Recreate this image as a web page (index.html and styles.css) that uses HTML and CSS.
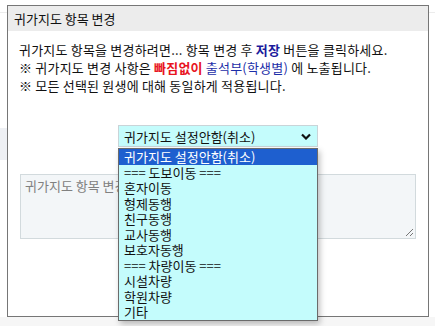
FILE: index.html
```html
<!DOCTYPE html>
<html>
<head>
    <title>귀가지도 항목 변경</title>
    <link rel="stylesheet" href="styles.css">
</head>
<body>
    <div class="page-bg">
        <div class="bg-line"></div>
        <div class="bg-side"></div>
        <div class="bg-foot"></div>
    </div>

    <div class="dialog">
        <div class="dialog-title">귀가지도 항목 변경</div>
        <div class="dialog-body">
            <p class="notice">
                귀가지도 항목을 변경하려면... 항목 변경 후 <b class="blue">저장</b> 버튼을 클릭하세요.<br>
                ※ 귀가지도 변경 사항은 <b class="red">빠짐없이</b> <span class="blue">출석부(학생별)</span> 에 노출됩니다.<br>
                ※ 모든 선택된 원생에 대해 동일하게 적용됩니다.
            </p>

            <div class="select-wrap">
                <div class="select">
                    <span>귀가지도 설정안함(취소)</span>
                    <svg class="chevron" width="10" height="7" viewBox="0 0 10 7">
                        <path d="M1 1.5 L5 5.5 L9 1.5" fill="none" stroke="#111" stroke-width="2.2"/>
                    </svg>
                </div>
                <ul class="options">
                    <li class="active">귀가지도 설정안함(취소)</li>
                    <li>=== 도보이동 ===</li>
                    <li>혼자이동</li>
                    <li>형제동행</li>
                    <li>친구동행</li>
                    <li>교사동행</li>
                    <li>보호자동행</li>
                    <li>=== 차량이동 ===</li>
                    <li>시설차량</li>
                    <li>학원차량</li>
                    <li>기타</li>
                </ul>
            </div>

            <div class="memo">
                <span class="placeholder">귀가지도 항목 변경 메모</span>
                <svg class="grip" width="9" height="9" viewBox="0 0 9 9">
                    <path d="M8 1 L1 8 M8 5 L5 8" stroke="#777" stroke-width="1"/>
                </svg>
            </div>
        </div>
    </div>
</body>
</html>
```

FILE: styles.css
```css
body {
    margin: 0;
    padding: 5px 7px;
    background: #fff;
    font-family: "Noto Sans CJK KR", "Noto Sans", sans-serif;
    font-size: 13px;
    color: #111;
    position: relative;
    height: 316px;
    overflow: hidden;
}
.page-bg .bg-line {
    position: absolute;
    top: 12px;
    left: 0;
    right: 0;
    height: 1px;
    background: #ececec;
}
.page-bg .bg-side {
    position: absolute;
    top: 128px;
    left: 0;
    width: 7px;
    height: 32px;
    background: #eef0f4;
}
.page-bg .bg-foot {
    position: absolute;
    left: 0;
    right: 0;
    top: 317px;
    height: 9px;
    background: #f6f6f6;
}
.dialog {
    position: relative;
    width: 420px;
    height: 310px;
    border: 1px solid #767676;
    background: #fff;
}
.dialog-title {
    height: 25px;
    line-height: 25px;
    padding-left: 6px;
    background: #ececec;
}
.dialog-body {
    padding: 10px 0 0 11px;
}
.notice {
    margin: 0;
    line-height: 18px;
    letter-spacing: 0.2px;
}
.blue {
    color: #1c2ea8;
}
b.blue {
    color: #1a1a9c;
}
.red {
    color: #e8141e;
}
.select-wrap {
    position: relative;
    width: 200px;
    margin: 30px 0 0 99px;
}
.select {
    height: 20px;
    border: 1px solid #c9d4d8;
    background: #c4fcfc;
    display: flex;
    align-items: center;
    justify-content: space-between;
    padding: 0 6px 0 5px;
}
.chevron {
    margin-top: 1px;
}
.options {
    position: absolute;
    top: 23px;
    left: 0;
    width: 198px;
    margin: 0;
    padding: 0;
    list-style: none;
    background: #c4fcfc;
    border: 1px solid #6b6b6b;
    box-shadow: 2px 3px 6px rgba(0,0,0,0.25);
    z-index: 10;
}
.options li {
    height: 15.5px;
    line-height: 15.5px;
    padding-left: 5px;
    white-space: nowrap;
}
.options li.active {
    background: #1e5fcf;
    color: #fff;
}
.memo {
    position: relative;
    width: 394px;
    height: 63px;
    margin: 27px 0 0 1px;
    border: 1px solid #d2dadd;
    background: #f3f6f8;
}
.placeholder {
    display: block;
    padding: 1px 0 0 4px;
    color: #808080;
}
.grip {
    position: absolute;
    right: 1px;
    bottom: 1px;
}
```
